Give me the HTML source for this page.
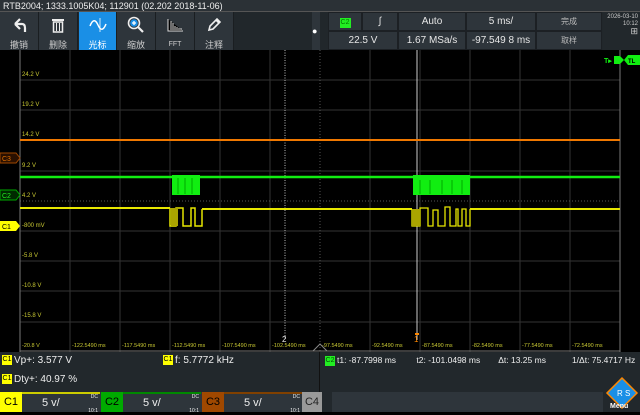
<!DOCTYPE html>
<html><head><meta charset="utf-8"><style>
*{margin:0;padding:0;box-sizing:border-box}
body{width:640px;height:412px;background:#000;position:relative;overflow:hidden;font-family:"Liberation Sans","Noto Sans CJK SC",sans-serif;color:#ddd}
.abs{position:absolute}
.title{left:0;top:0;width:640px;height:12px;background:#2b3136;font-size:9px;line-height:12px;padding-left:3px;color:#eee;border-bottom:1px solid #555}
.tb{top:12px;height:38px;background:#2e353b;border-right:1px solid #1a1e21;text-align:center;font-size:9px;color:#ccc}
.tb .ic{height:26px;display:flex;align-items:center;justify-content:center}
.cell{background:#2e353b;border:1px solid #1c2024;font-size:10px;color:#e6e6e6;text-align:center;line-height:18px}
.ylab{font-size:6px;color:#c8c832;left:22px}
.xlab{font-size:5.5px;color:#c8c832;top:343px}
.meas{font-size:10px;color:#eee}
.tag{display:inline-block;background:#ff0;color:#000;font-size:7px;width:10px;height:10px;line-height:10px;text-align:center;margin-right:2px;vertical-align:middle}
</style></head><body>
<div class="abs title">RTB2004; 1333.1005K04; 112901 (02.202 2018-11-06)</div>
<div class="abs" style="left:0;top:12px;width:640px;height:38px;background:#21272b"></div>
<div class="abs tb" style="left:0;width:39px"><div class="ic"><svg width="16" height="16"><path d="M4 7 L9 2 M4 7 L9 12 M4 7 H11 Q14 7 14 11 V15" stroke="#eee" stroke-width="2.2" fill="none"/></svg></div>撤销</div>
<div class="abs tb" style="left:39px;width:39px"><div class="ic"><svg width="14" height="16"><rect x="1" y="2" width="12" height="2" fill="#eee"/><rect x="2.5" y="5" width="9" height="10" fill="none" stroke="#eee" stroke-width="1.5"/><path d="M5.5 6v8M8.5 6v8" stroke="#eee"/></svg></div>删除</div>
<div class="abs tb" style="left:79px;width:38px;background:#1a8fe6;color:#fff"><div class="ic"><svg width="18" height="16"><path d="M1 9 Q5 -1 9 8 Q13 17 17 7" stroke="#fff" stroke-width="1.5" fill="none"/><path d="M11 1V15" stroke="#fff" stroke-width="0.8"/></svg></div>光标</div>
<div class="abs tb" style="left:117px;width:39px"><div class="ic"><svg width="18" height="18"><circle cx="7" cy="7" r="5.5" stroke="#eee" stroke-width="1.6" fill="none"/><circle cx="7" cy="7" r="3.8" fill="#1a8fe6"/><path d="M5 7h4M7 5v4" stroke="#fff" stroke-width="1.3"/><path d="M11 11l5 5" stroke="#eee" stroke-width="2.2"/></svg></div>缩放</div>
<div class="abs tb" style="left:156px;width:39px"><div class="ic"><svg width="18" height="14"><path d="M2 1v12h15M5 3v9M7 5v7M9 8v4M11 9v3M13 10v2M15 10v2" stroke="#ddd" stroke-width="1"/></svg></div><span style="font-size:7px">FFT</span></div>
<div class="abs tb" style="left:195px;width:39px"><div class="ic"><svg width="16" height="16"><path d="M3 13 L4 9 L11 2 L14 5 L7 12 Z M10 3 l3 3" stroke="#eee" stroke-width="1.6" fill="none"/></svg></div>注释</div>
<div class="abs" style="left:312px;top:12px;width:8px;height:38px;background:#2e353b;font-size:9px;line-height:38px;color:#fff">●</div>
<div class="abs cell" style="left:328px;top:12px;width:34px;height:19px"><span style="display:inline-block;width:11px;height:10px;background:#2e2;margin-top:4px;line-height:10px;font-size:7px;color:#070">C2</span></div>
<div class="abs cell" style="left:362px;top:12px;width:36px;height:19px">∫</div>
<div class="abs cell" style="left:398px;top:12px;width:68px;height:19px">Auto</div>
<div class="abs cell" style="left:466px;top:12px;width:70px;height:19px">5 ms/</div>
<div class="abs cell" style="left:536px;top:12px;width:66px;height:19px;font-size:8px;color:#bbb">完成</div>
<div class="abs cell" style="left:328px;top:31px;width:70px;height:19px">22.5 V</div>
<div class="abs cell" style="left:398px;top:31px;width:68px;height:19px">1.67 MSa/s</div>
<div class="abs cell" style="left:466px;top:31px;width:70px;height:19px">-97.549 8 ms</div>
<div class="abs cell" style="left:536px;top:31px;width:66px;height:19px;font-size:8px;color:#bbb">取样</div>
<div class="abs" style="left:603px;top:12px;width:37px;height:38px;background:#22282c;font-size:6px;text-align:right;padding-right:2px;color:#ccc;line-height:7px;padding-top:2px">2026-03-10<br>10:12<br><span style="font-size:9px">⊞</span></div>

<svg class="abs" style="left:0;top:50px" width="640" height="302">
<rect x="0" y="0" width="640" height="302" fill="#000"/>
<rect x="620" y="0" width="20" height="302" fill="#000"/>
<g stroke="#333" stroke-width="1">
<path d="M70 0V302M120 0V302M170 0V302M220 0V302M270 0V302M370 0V302M420 0V302M470 0V302M520 0V302M570 0V302"/>
<path d="M20 30H620M20 60H620M20 90H620M20 121H620M20 181H620M20 211H620M20 241H620M20 272H620"/>
</g>
<path d="M320 0V302M20 151H620" stroke="#555" stroke-dasharray="1 2"/>
<path d="M20 0V302M620 0V302M20 301H620" stroke="#777"/>
<path d="M285 0V290" stroke="#bbb" stroke-dasharray="1 1.5"/>
<path d="M417 0V290" stroke="#ccc"/>
<path d="M20 90H620" stroke="#f07800" stroke-width="2"/>
<path d="M20 127H172M200 127H413M470 127H620" stroke="#1e1" stroke-width="2.5"/>
<rect x="172" y="125" width="28" height="20" fill="#1e1"/>
<path d="M178 128v16M185 128v16M192 128v16" stroke="#0a0" stroke-width="1"/>
<rect x="413" y="125" width="57" height="20" fill="#1e1"/>
<path d="M420 130v14M430 130v14M442 130v14M452 130v14M462 130v14" stroke="#0a0" stroke-width="1"/>
<path d="M20 158H170M202 159H412M470 159H620" stroke="#e6e600" stroke-width="2"/>
<path d="M170 158V176H176V158H183V176H191V158H195V176H202V159" stroke="#e6e600" stroke-width="1.5" fill="none"/>
<rect x="171" y="158" width="7" height="18" fill="#aaa400"/>
<path d="M412 159V176H420V158H428V176H433V160H438V176H445V157H450V176H456V159H458V176H462V159H466V176H470V159" stroke="#e6e600" stroke-width="1.3" fill="none"/>
<rect x="412" y="159" width="8" height="17" fill="#aaa400"/>
<path d="M0 103H16L20 108L16 113H0Z" fill="#2a1000" stroke="#a04800"/>
<text x="2" y="111" font-size="7" fill="#e07000" font-family="Liberation Sans">C3</text>
<path d="M0 140H16L20 145L16 150H0Z" fill="#002a00" stroke="#0a0"/>
<text x="2" y="148" font-size="7" fill="#2e2" font-family="Liberation Sans">C2</text>
<path d="M0 171H16L20 176L16 181H0Z" fill="#ff0"/>
<text x="2" y="179" font-size="7" fill="#000" font-family="Liberation Sans">C1</text>
<path d="M614 6H620L624 10L620 14H614Z" fill="#1e1"/>
<path d="M624 10L628 5H640V15H628Z" fill="#1e1"/>
<text x="628" y="13" font-size="6" fill="#000" font-family="Liberation Sans" font-weight="bold">TL</text>
<text x="604" y="13" font-size="7" fill="#1e1" font-family="Liberation Sans" font-weight="bold">T▸</text>
<path d="M313 301L320 294L327 301" stroke="#888" fill="none"/>
<text x="282" y="292" font-size="8" fill="#eee" font-family="Liberation Sans">2</text>
<rect x="415" y="283" width="4" height="2" fill="#f80"/>
<text x="414" y="292" font-size="8" fill="#f80" font-family="Liberation Sans">1</text>
</svg>
<div class="abs ylab" style="top:72px">24.2 V</div>
<div class="abs ylab" style="top:102px">19.2 V</div>
<div class="abs ylab" style="top:132px">14.2 V</div>
<div class="abs ylab" style="top:163px">9.2 V</div>
<div class="abs ylab" style="top:193px">4.2 V</div>
<div class="abs ylab" style="top:223px">-800 mV</div>
<div class="abs ylab" style="top:253px">-5.8 V</div>
<div class="abs ylab" style="top:283px">-10.8 V</div>
<div class="abs ylab" style="top:313px">-15.8 V</div>
<div class="abs xlab" style="left:22px">-20.8 V</div>
<div class="abs xlab" style="left:72px">-122.5490 ms</div>
<div class="abs xlab" style="left:122px">-117.5490 ms</div>
<div class="abs xlab" style="left:172px">-112.5490 ms</div>
<div class="abs xlab" style="left:222px">-107.5490 ms</div>
<div class="abs xlab" style="left:272px">-102.5490 ms</div>
<div class="abs xlab" style="left:322px">-97.5490 ms</div>
<div class="abs xlab" style="left:372px">-92.5490 ms</div>
<div class="abs xlab" style="left:422px">-87.5490 ms</div>
<div class="abs xlab" style="left:472px">-82.5490 ms</div>
<div class="abs xlab" style="left:522px">-77.5490 ms</div>
<div class="abs xlab" style="left:572px">-72.5490 ms</div>

<div class="abs" style="left:0;top:352px;width:640px;height:40px;background:#22282c"></div>
<div class="abs" style="left:319px;top:352px;width:1px;height:40px;background:#111"></div>
<div class="abs meas" style="left:2px;top:355px"><span class="tag">C1</span>Vp+: 3.577 V</div>
<div class="abs meas" style="left:163px;top:355px"><span class="tag">C1</span>f: 5.7772 kHz</div>
<div class="abs meas" style="left:2px;top:374px"><span class="tag">C1</span>Dty+: 40.97 %</div>
<div class="abs meas" style="left:325px;top:355px;font-size:8.5px"><span class="tag" style="background:#2e2;color:#050">C2</span>t1: -87.7998 ms <span style="margin-left:18px">t2: -101.0498 ms</span><span style="margin-left:18px">Δt: 13.25 ms</span><span style="margin-left:26px">1/Δt: 75.4717 Hz</span></div>

<div class="abs" style="left:0;top:392px;width:640px;height:20px;background:#2e353b"></div>
<div class="abs" style="left:0;top:392px;width:22px;height:20px;background:#ff0;color:#000;font-size:11px;line-height:20px;text-align:center">C1</div>
<div class="abs" style="left:22px;top:392px;width:78px;height:20px;border-top:2px solid #cc0;font-size:11px;line-height:18px;padding-left:20px;color:#eee">5 v/<span style="position:absolute;right:2px;top:0;font-size:5px;line-height:7px;text-align:right">DC<br><br>10:1</span></div>
<div class="abs" style="left:101px;top:392px;width:22px;height:20px;background:#0a0;color:#000;font-size:11px;line-height:20px;text-align:center">C2</div>
<div class="abs" style="left:123px;top:392px;width:78px;height:20px;border-top:2px solid #080;font-size:11px;line-height:18px;padding-left:20px;color:#eee">5 v/<span style="position:absolute;right:2px;top:0;font-size:5px;line-height:7px;text-align:right">DC<br><br>10:1</span></div>
<div class="abs" style="left:202px;top:392px;width:22px;height:20px;background:#a04800;color:#000;font-size:11px;line-height:20px;text-align:center">C3</div>
<div class="abs" style="left:224px;top:392px;width:78px;height:20px;border-top:2px solid #804000;font-size:11px;line-height:18px;padding-left:20px;color:#eee">5 v/<span style="position:absolute;right:2px;top:0;font-size:5px;line-height:7px;text-align:right">DC<br><br>10:1</span></div>
<div class="abs" style="left:302px;top:392px;width:20px;height:20px;background:#999;color:#222;font-size:11px;line-height:20px;text-align:center">C4</div>
<div class="abs" style="left:322px;top:392px;width:10px;height:20px;background:#22282c"></div>
<div class="abs" style="left:603px;top:392px;width:37px;height:20px;background:#22282c"></div>
<svg class="abs" style="left:605px;top:376px" width="34" height="34"><path d="M17 2L32 17L17 32L2 17Z" fill="#1a8fe6" stroke="#f80" stroke-width="1.5"/><text x="12" y="20" font-size="8" fill="#fff" font-family="Liberation Sans">R S</text></svg>
<div class="abs" style="left:610px;top:403px;font-size:7px;color:#fff;font-weight:bold">Menu</div>
</body></html>
